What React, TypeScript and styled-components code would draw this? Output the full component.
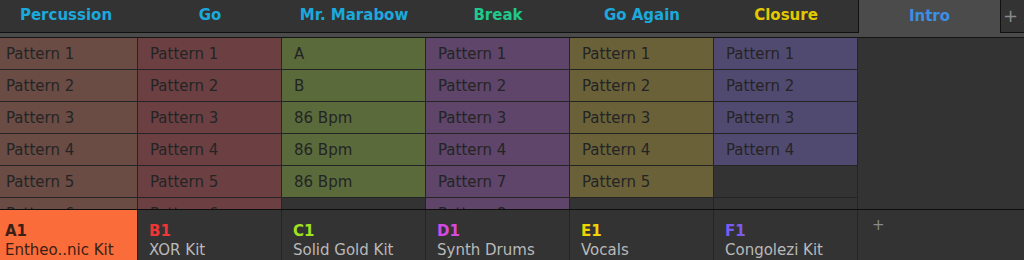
import React from "react";
import styled, { createGlobalStyle } from "styled-components";

const GlobalStyle = createGlobalStyle`
  html, body {
    margin: 0;
    padding: 0;
    background: #333333;
    overflow: hidden;
  }
  body {
    font-family: "DejaVu Sans", "Liberation Sans", sans-serif;
  }
`;

const Screen = styled.div`
  width: 1024px;
  height: 260px;
  overflow: hidden;
  background: #333333;
  display: flex;
  flex-direction: column;
`;

const TabBar = styled.div`
  display: grid;
  grid-template-columns: repeat(6, 144px) 143px 1fr;
  margin-left: -6px;
  height: 33px;
  flex: none;
`;

const Tab = styled.div<{ $color: string; $active?: boolean }>`
  display: flex;
  align-items: center;
  justify-content: center;
  font-size: 15px;
  font-weight: bold;
  color: ${(p) => p.$color};
  background: ${(p) => (p.$active ? "#4b4b4b" : "#333333")};
  border-bottom: ${(p) => (p.$active ? "none" : "1px solid #111")};
  border-left: ${(p) => (p.$active ? "1px solid #111" : "none")};
  border-right: ${(p) => (p.$active ? "1px solid #111" : "none")};
  padding-bottom: 2px;
`;

const AddTab = styled.div`
  display: flex;
  align-items: center;
  justify-content: flex-start;
  padding-left: 2px;
  padding-bottom: 2px;
  color: #8a8a8a;
  font-size: 18px;
  border-bottom: 1px solid #111;
`;

const Strip = styled.div`
  height: 4px;
  background: #4b4b4b;
  border-bottom: 1px solid #151515;
  flex: none;
`;

const Grid = styled.div`
  display: grid;
  grid-template-columns: repeat(6, 144px) 1fr;
  grid-auto-rows: 32px;
  margin-left: -6px;
  height: 171px;
  overflow: hidden;
  flex: none;
`;

const Column = styled.div`
  display: grid;
  grid-auto-rows: 32px;
`;

const Cell = styled.div<{ $bg?: string }>`
  display: flex;
  align-items: center;
  padding-left: 12px;
  font-size: 15px;
  color: #242424;
  background: ${(p) => p.$bg || "#333333"};
  border-right: 1px solid #242424;
  border-bottom: 1px solid #242424;
  border-radius: 1px;
  white-space: nowrap;
  overflow: hidden;
`;

const Blank = styled.div`
  background: #333333;
`;

const KitBar = styled.div`
  display: grid;
  grid-template-columns: repeat(6, 144px) 1fr;
  margin-left: -6px;
  border-top: 1px solid #0e0e0e;
  flex: 1;
`;

const Kit = styled.div<{ $active?: boolean }>`
  display: flex;
  flex-direction: column;
  justify-content: flex-start;
  padding: 12px 0 0 11px;
  background: ${(p) => (p.$active ? "#fa6d3a" : "#333333")};
  border-right: 1px solid #242424;
  white-space: nowrap;
  overflow: hidden;
`;

const KitId = styled.div<{ $color: string }>`
  font-size: 15px;
  font-weight: bold;
  color: ${(p) => p.$color};
  line-height: 18px;
`;

const KitName = styled.div<{ $active?: boolean }>`
  font-size: 15px;
  color: ${(p) => (p.$active ? "#3a2015" : "#b9b9b9")};
  line-height: 19px;
  margin-top: 1px;
`;

const AddKit = styled.div`
  color: #8a8a8a;
  font-size: 15px;
  padding: 6px 0 0 14px;
`;

const scenes = [
  { name: "Percussion", color: "#1ba9dd" },
  { name: "Go", color: "#1ba9dd" },
  { name: "Mr. Marabow", color: "#1ba9dd" },
  { name: "Break", color: "#1fc98a" },
  { name: "Go Again", color: "#1ba9dd" },
  { name: "Closure", color: "#e3c800" },
  { name: "Intro", color: "#3b8fe4", active: true },
];

const columns: { bg: string; cells: (string | null)[] }[] = [
  { bg: "#6a4c44", cells: ["Pattern 1", "Pattern 2", "Pattern 3", "Pattern 4", "Pattern 5", "Pattern 6"] },
  { bg: "#6c4043", cells: ["Pattern 1", "Pattern 2", "Pattern 3", "Pattern 4", "Pattern 5", "Pattern 6"] },
  { bg: "#5a6a3b", cells: ["A", "B", "86 Bpm", "86 Bpm", "86 Bpm", null] },
  { bg: "#5e4569", cells: ["Pattern 1", "Pattern 2", "Pattern 3", "Pattern 4", "Pattern 7", "Pattern 8"] },
  { bg: "#6a6139", cells: ["Pattern 1", "Pattern 2", "Pattern 3", "Pattern 4", "Pattern 5", null] },
  { bg: "#514a70", cells: ["Pattern 1", "Pattern 2", "Pattern 3", "Pattern 4", null, null] },
];

const kits = [
  { id: "A1", name: "Entheo..nic Kit", color: "#3a2015", active: true },
  { id: "B1", name: "XOR Kit", color: "#ef3535" },
  { id: "C1", name: "Solid Gold Kit", color: "#a0e21f" },
  { id: "D1", name: "Synth Drums", color: "#d64ae4" },
  { id: "E1", name: "Vocals", color: "#f0d400" },
  { id: "F1", name: "Congolezi Kit", color: "#7a5cf2" },
];

export default function App() {
  return (
    <Screen>
      <GlobalStyle />
      <TabBar>
        {scenes.map((s) => (
          <Tab key={s.name} $color={s.color} $active={s.active}>
            {s.name}
          </Tab>
        ))}
        <AddTab>+</AddTab>
      </TabBar>
      <Strip />
      <Grid>
        {columns.map((col, i) => (
          <Column key={i}>
            {col.cells.map((c, j) => (
              <Cell key={j} $bg={c ? col.bg : undefined}>
                {c}
              </Cell>
            ))}
          </Column>
        ))}
        <Blank />
      </Grid>
      <KitBar>
        {kits.map((k) => (
          <Kit key={k.id} $active={k.active}>
            <KitId $color={k.color}>{k.id}</KitId>
            <KitName $active={k.active}>{k.name}</KitName>
          </Kit>
        ))}
        <AddKit>+</AddKit>
      </KitBar>
    </Screen>
  );
}
